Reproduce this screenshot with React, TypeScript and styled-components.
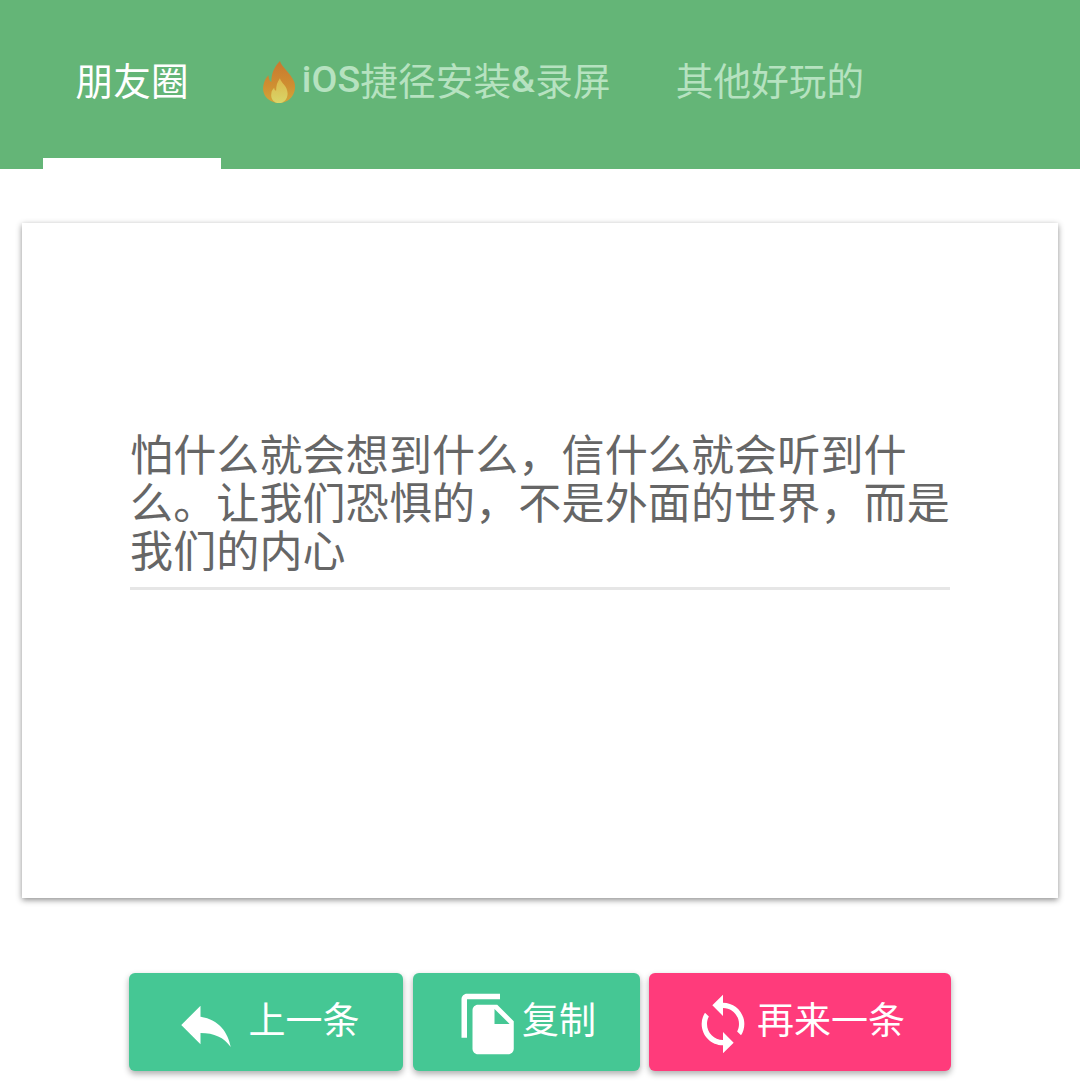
import React from 'react';
import styled, { createGlobalStyle } from 'styled-components';
import { MdReply, MdFileCopy, MdSync } from 'react-icons/md';

const GlobalStyle = createGlobalStyle`
  html, body {
    margin: 0;
    padding: 0;
    background: #fff;
    font-family: Roboto, "Noto Sans CJK SC", sans-serif;
  }
  * {
    box-sizing: border-box;
  }
`;

const Page = styled.div`
  width: 1080px;
  height: 1091px;
  overflow: hidden;
  background: #fff;
`;

const TabBar = styled.nav`
  display: flex;
  height: 169px;
  padding-left: 43px;
  background: #64b577;
`;

const Tab = styled.div<{ $active?: boolean }>`
  position: relative;
  display: flex;
  align-items: center;
  height: 100%;
  padding: 0 32.6px 12px;
  font-size: 37.6px;
  letter-spacing: 0.1px;
  white-space: pre;
  color: ${(p) => (p.$active ? '#fff' : '#b6e2c0')};
  &::after {
    content: '';
    display: ${(p) => (p.$active ? 'block' : 'none')};
    position: absolute;
    left: 0;
    right: 0;
    bottom: 0;
    height: 11px;
    background: #fff;
  }
`;

const Latin = styled.span`
  font-weight: 500;
`;

const Flame = styled.svg`
  width: 46px;
  height: 44px;
  flex: none;
  margin-top: 6px;
  margin-left: 2px;
`;

const Card = styled.section`
  display: flex;
  flex-direction: column;
  align-items: center;
  height: 675px;
  margin: 54px 22px 0;
  padding-top: 209px;
  background: #fff;
  box-shadow: 0 2px 6px rgba(0, 0, 0, 0.45);
`;

const Quote = styled.div`
  width: 820px;
  padding-bottom: 11px;
  border-bottom: 3px solid #e6e6e6;
  font-size: 43px;
  letter-spacing: 0.15px;
  line-height: 48px;
  color: #666;
`;

const Actions = styled.div`
  display: flex;
  justify-content: center;
  gap: 9.5px;
  margin-top: 75px;
`;

const ActionButton = styled.button<{ $width: number; $pink?: boolean }>`
  display: flex;
  align-items: center;
  justify-content: center;
  width: ${(p) => p.$width}px;
  height: 98px;
  padding: 0 ${(p) => (p.$pink ? '4px' : '0')} 8px 0;
  border: none;
  border-radius: 6px;
  background: ${(p) => (p.$pink ? '#ff3b7b' : '#45c794')};
  box-shadow: 0 3px 6px rgba(0, 0, 0, 0.32);
  color: #fff;
  font-family: inherit;
  font-size: 37px;
  svg {
    flex: none;
  }
`;

const ReplyIcon = styled(MdReply)`
  width: 66px;
  height: 66px;
  margin-right: 10px;
  margin-top: 14px;
`;

const CopyIcon = styled(MdFileCopy)`
  width: 66px;
  height: 66px;
  margin-top: 12px;
`;

const SyncIcon = styled(MdSync)`
  width: 64px;
  height: 64px;
  margin-top: 12px;
  margin-right: 2px;
`;

export default function App() {
  return (
    <Page>
      <GlobalStyle />
      <TabBar>
        <Tab $active>朋友圈</Tab>
        <Tab>
          <Flame viewBox="0 0 46 46">
            <defs>
              <linearGradient id="flameOuter" x1="0" y1="0" x2="0" y2="1">
                <stop offset="0" stopColor="#c9782f" />
                <stop offset="0.6" stopColor="#cf8f31" />
                <stop offset="1" stopColor="#d2a63a" />
              </linearGradient>
              <linearGradient id="flameInner" x1="0" y1="0" x2="0" y2="1">
                <stop offset="0" stopColor="#dcb64a" />
                <stop offset="1" stopColor="#d9d668" />
              </linearGradient>
            </defs>
            <path
              d="M24 1c2 7 11 12 15 22 3 10-3 21-15 22C12 45 4 36 7 25c1-4 3-7 5-9 0 3 1 6 3 7 0-9 3-16 9-22z"
              fill="url(#flameOuter)"
            />
            <path
              d="M24 19c1 5 8 8 8 16 0 6-4 10-9 10s-9-4-8-10c0-3 2-5 3-6 0 2 1 3 2 3 0-5 1-9 4-13z"
              fill="url(#flameInner)"
            />
          </Flame>
          <Latin>iOS</Latin>捷径安装<Latin>&amp;</Latin>录屏
        </Tab>
        <Tab>其他好玩的</Tab>
      </TabBar>
      <Card>
        <Quote>怕什么就会想到什么，信什么就会听到什么。让我们恐惧的，不是外面的世界，而是我们的内心</Quote>
      </Card>
      <Actions>
        <ActionButton $width={274}>
          <ReplyIcon />
          上一条
        </ActionButton>
        <ActionButton $width={227}>
          <CopyIcon />
          复制
        </ActionButton>
        <ActionButton $width={302} $pink>
          <SyncIcon />
          再来一条
        </ActionButton>
      </Actions>
    </Page>
  );
}
